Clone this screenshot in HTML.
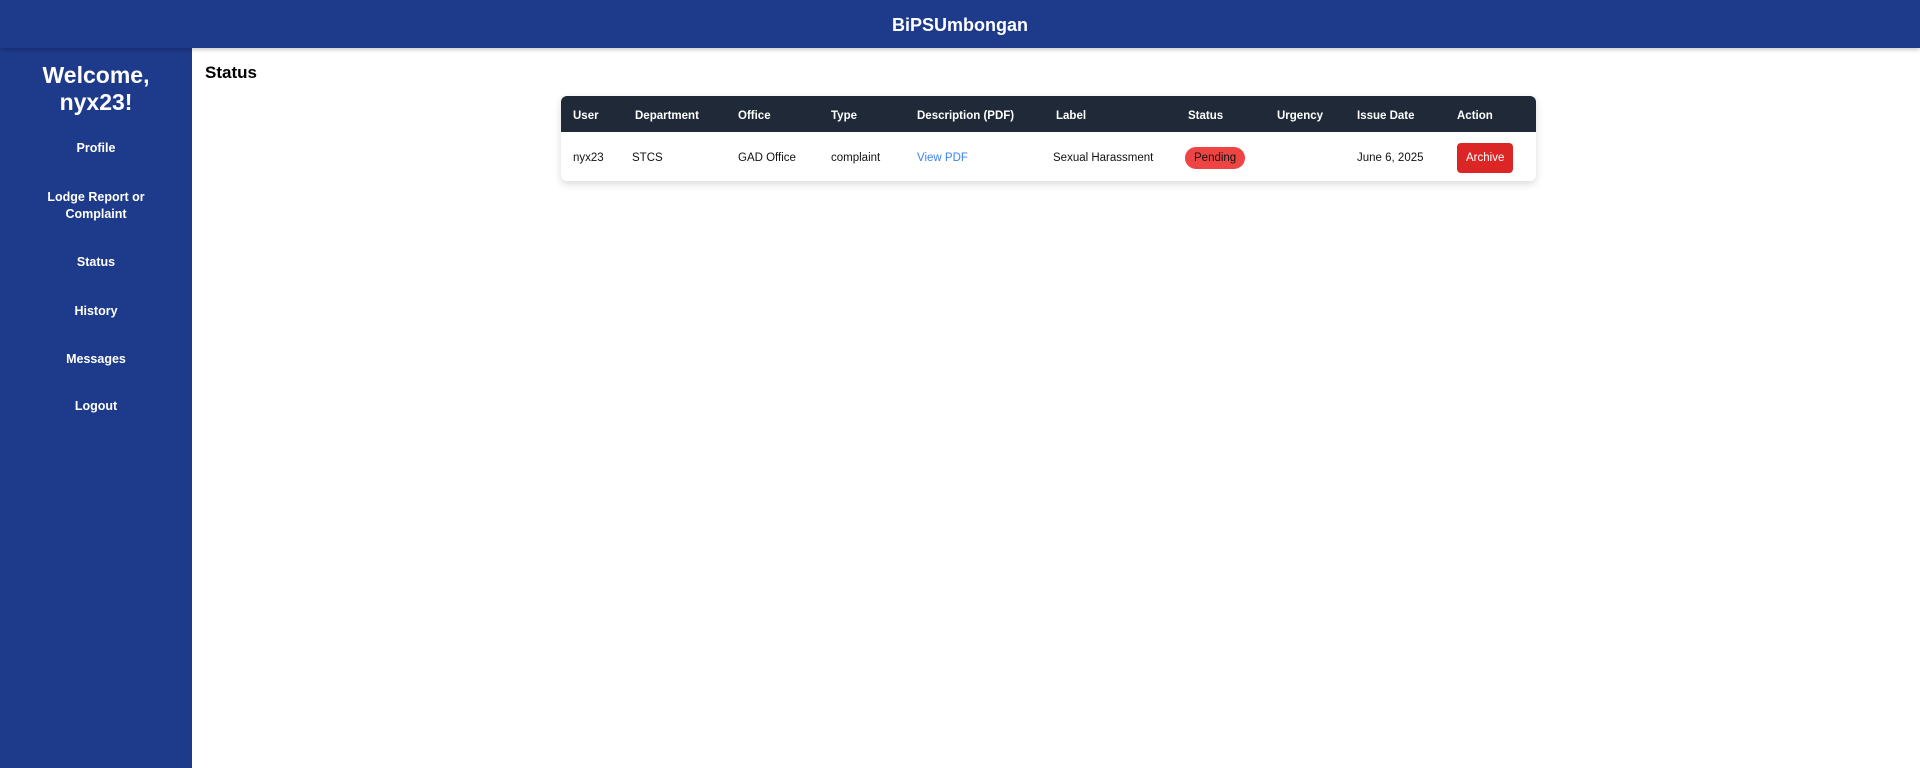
<!DOCTYPE html>
<html><head><meta charset="utf-8"><style>
*{margin:0;padding:0;box-sizing:border-box}
body{width:1920px;height:768px;overflow:hidden;font-family:"Liberation Sans",sans-serif;background:#fff;position:relative}
.top{position:absolute;left:0;top:0;width:1920px;height:48px;background:#1e3a8a;color:#fff;font-weight:bold;font-size:18px;text-align:center;line-height:50px;box-shadow:0 2px 4px rgba(0,0,0,.2);z-index:2}
.side{position:absolute;left:0;top:48px;width:192px;height:720px;background:#1e3a8a;color:#fff;text-align:center}
.side h2{font-size:23px;line-height:27px;margin-top:14px;font-weight:bold}
.nav{position:absolute;left:0;width:192px;font-size:12.5px;font-weight:bold;line-height:17px;color:#fff;text-align:center}
h1{position:absolute;left:205px;top:63px;font-size:17px;font-weight:bold}
.tbl{position:absolute;left:561px;top:96px;width:975px;height:85px;border-radius:6px;box-shadow:0 3px 8px rgba(0,0,0,.15);overflow:hidden;font-size:11.5px}
.hd{height:36px;background:#1f2937;color:#fff;font-weight:bold;position:relative}
.rw{height:49px;position:relative;background:#fff;color:#111}
.hd span,.rw span{position:absolute;white-space:nowrap}
.hd span{top:14px}.rw span{top:54%;transform:translateY(-50%)}
.pend{background:#ef4444;border-radius:11px;padding:5px 9px;color:#111}
.arch{background:#dc2626;color:#fff;border-radius:4px;padding:9px 9px}
</style></head><body>
<div class="top">BiPSUmbongan</div>
<div class="side"><h2>Welcome,<br>nyx23!</h2></div>
<div class="nav" style="top:140px">Profile</div>
<div class="nav" style="top:189px">Lodge Report or<br>Complaint</div>
<div class="nav" style="top:254px">Status</div>
<div class="nav" style="top:303px">History</div>
<div class="nav" style="top:351px">Messages</div>
<div class="nav" style="top:398px">Logout</div>
<h1>Status</h1>
<div class="tbl">
<div class="hd">
<span style="left:12px">User</span><span style="left:74px">Department</span><span style="left:177px">Office</span><span style="left:270px">Type</span><span style="left:356px">Description (PDF)</span><span style="left:495px">Label</span><span style="left:627px">Status</span><span style="left:716px">Urgency</span><span style="left:796px">Issue Date</span><span style="left:896px">Action</span>
</div>
<div class="rw">
<span style="left:12px">nyx23</span><span style="left:71px">STCS</span><span style="left:177px">GAD Office</span><span style="left:270px">complaint</span><span style="left:356px;color:#3b82f6">View PDF</span><span style="left:492px">Sexual Harassment</span><span class="pend" style="left:624px">Pending</span><span style="left:796px">June 6, 2025</span><span class="arch" style="left:896px">Archive</span>
</div>
</div>
</body></html>
